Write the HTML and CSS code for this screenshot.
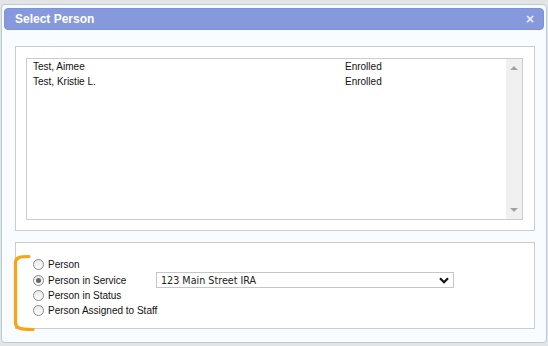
FILE: index.html
```html
<!DOCTYPE html>
<html>
<head>
<meta charset="utf-8">
<link rel="stylesheet" href="styles.css">
</head>
<body>
<div class="dialog">
  <div class="titlebar">
    <span class="title">Select Person</span>
    <span class="close">×</span>
  </div>
  <div class="content">
    <div class="fieldset list-set">
      <div class="listbox">
        <div class="rows">
          <div class="row"><span class="name">Test, Aimee</span><span class="status">Enrolled</span></div>
          <div class="row"><span class="name">Test, Kristie L.</span><span class="status">Enrolled</span></div>
        </div>
        <div class="scrollbar">
          <span class="arrow up"></span>
          <span class="arrow down"></span>
        </div>
      </div>
    </div>
    <div class="fieldset options">
      <div class="opt r1"><span class="radio"></span><span class="lbl">Person</span></div>
      <div class="opt r2"><span class="radio checked"></span><span class="lbl wide">Person in Service</span>
        <div class="select"><span>123 Main Street IRA</span>
          <svg class="chev" width="10" height="7" viewBox="0 0 10 7"><path d="M1 1.2 L5 5.2 L9 1.2" fill="none" stroke="#111" stroke-width="2.2"/></svg>
        </div>
      </div>
      <div class="opt r3"><span class="radio"></span><span class="lbl">Person in Status</span></div>
      <div class="opt r4"><span class="radio"></span><span class="lbl">Person Assigned to Staff</span></div>
      <svg class="bracket" width="24" height="78" viewBox="0 0 24 78"><path d="M16 2.5 C8 2.5 3 3 2.5 8 L2.5 68 C2.5 74 6 75.5 20 75.5" fill="none" stroke="#f5a516" stroke-width="3.2" stroke-linecap="round"/></svg>
    </div>
  </div>
</div>
</body>
</html>
```

FILE: styles.css
```css
html, body {
  margin: 0;
  padding: 0;
}
body {
  background: #e2e4e6;
  width: 548px;
  height: 346px;
  overflow: hidden;
  font-family: "Liberation Sans", Arial, sans-serif;
  font-size: 10px;
  color: #222;
  padding-top: 4px;
  box-sizing: border-box;
}
.dialog {
  margin: 0 1px;
  height: 339px;
  box-sizing: border-box;
  border: 1px solid #b8cbdc;
  border-radius: 4px;
  background: #f9fcfe;
  padding: 3px 2px 0 2px;
}
.titlebar {
  height: 22px;
  box-sizing: border-box;
  background: #8699dd;
  border: 1px solid #7d92d8;
  border-radius: 4px;
  display: flex;
  align-items: center;
  justify-content: space-between;
  padding: 0 8px 0 10px;
  color: #fff;
}
.title {
  font-family: "Liberation Sans", Arial, sans-serif;
  font-weight: bold;
  font-size: 12px;
}
.close {
  font-family: "DejaVu Sans", sans-serif;
  font-weight: bold;
  font-size: 12px;
  color: #eef;
}
.content {
  padding: 16px 9px 0 11px;
}
.fieldset {
  border: 1px solid #cccccc;
  background: #fff;
}
.list-set {
  height: 185px;
  box-sizing: border-box;
  padding: 11px 11px 10px 10px;
}
.listbox {
  height: 162px;
  box-sizing: border-box;
  border: 1px solid #cccccc;
  display: flex;
  background: #fff;
}
.rows {
  flex: 1;
  padding-top: 0;
}
.row {
  display: flex;
  height: 15px;
  line-height: 15px;
  padding-left: 6px;
  color: #111;
}
.name {
  width: 312px;
}
.scrollbar {
  width: 16px;
  background: #f0f0f0;
  display: flex;
  flex-direction: column;
  justify-content: space-between;
  align-items: center;
  padding: 7px 0 7px;
}
.arrow {
  width: 0;
  height: 0;
  border-left: 4px solid transparent;
  border-right: 4px solid transparent;
}
.arrow.up {
  border-bottom: 4px solid #a3a3a3;
}
.arrow.down {
  border-top: 4px solid #a3a3a3;
}
.options {
  margin-top: 11px;
  height: 87px;
  box-sizing: border-box;
  padding: 14px 0 0 17px;
  position: relative;
}
.opt {
  display: flex;
  align-items: center;
  height: 15px;
  color: #111;
  white-space: nowrap;
}
.opt.r2 {
  height: 16px;
}
.radio {
  width: 11px;
  height: 11px;
  box-sizing: border-box;
  border: 1px solid #8a8a8a;
  border-radius: 50%;
  background: linear-gradient(#eaeaea, #fdfdfd);
  margin-right: 4px;
  display: flex;
  align-items: center;
  justify-content: center;
  flex: none;
}
.radio.checked::after {
  content: "";
  width: 5px;
  height: 5px;
  border-radius: 50%;
  background: #666;
}
.lbl.wide {
  width: 108px;
}
.select {
  width: 298px;
  height: 16px;
  box-sizing: border-box;
  border: 1px solid #c6c6c6;
  background: #fff;
  display: flex;
  align-items: center;
  justify-content: space-between;
  padding: 0 4px 0 4px;
  font-family: "DejaVu Sans", Verdana, sans-serif;
  font-size: 9.6px;
  color: #222;
}
.chev {
  display: block;
}
.bracket {
  position: absolute;
  left: -3px;
  top: 11px;
}
```
